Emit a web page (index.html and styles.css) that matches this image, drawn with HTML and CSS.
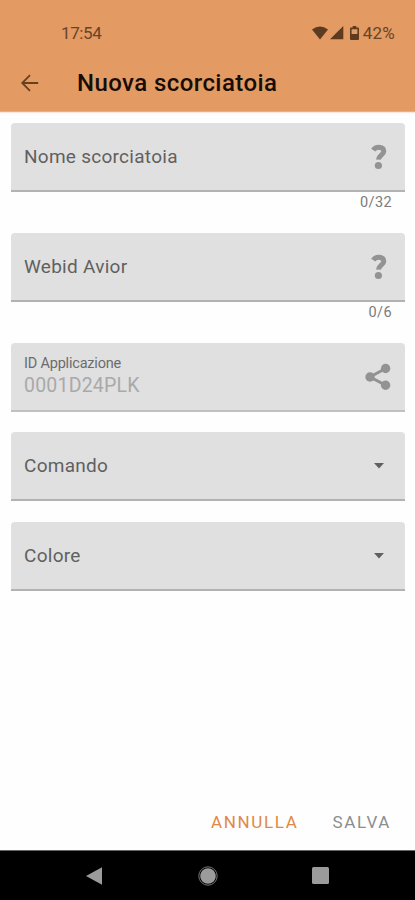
FILE: index.html
```html
<!DOCTYPE html>
<html lang="it">
<head>
<meta charset="utf-8">
<meta name="viewport" content="width=device-width, initial-scale=1">
<title>Nuova scorciatoia</title>
<link rel="stylesheet" href="styles.css">
</head>
<body>
<div class="screen">
  <header class="header">
    <div class="status">
      <span class="clock">17:54</span>
      <span class="indicators">
        <svg class="wifi" width="16" height="14" viewBox="0 0 16 14"><path d="M0 3.5Q8-2.7 16 3.5L8 13.5Z"/></svg>
        <svg class="signal" width="14" height="14" viewBox="0 0 14 14"><path d="M13.3 0V13.2H0Z"/></svg>
        <svg class="battery" width="9" height="14" viewBox="0 0 9 14"><path fill-rule="evenodd" d="M2.7 0H6.3V1.5H8Q9 1.5 9 2.5V13Q9 14 8 14H1Q0 14 0 13V2.5Q0 1.5 1 1.5H2.7ZM1.6 3.2V8H7.4V3.2Z"/></svg>
        <span class="percent">42%</span>
      </span>
    </div>
    <div class="appbar">
      <svg class="back" width="18" height="18" viewBox="0 0 18 18"><path d="M17.2 9H1.4M9 1.2L1.2 9L9 16.8"/></svg>
      <h1 class="title">Nuova scorciatoia</h1>
    </div>
  </header>
  <main class="form">
    <div class="field">
      <span class="label">Nome scorciatoia</span>
      <svg class="help" width="16" height="26" viewBox="0 0 16 26"><path d="M2.2 6.2Q4.2 3.3 7.6 3.3Q12.8 3.3 12.8 7.3C12.8 11 7.6 11.4 7.4 15.6"/><circle cx="7.4" cy="21.5" r="3.6"/></svg>
    </div>
    <div class="counter">0/32</div>
    <div class="field">
      <span class="label">Webid Avior</span>
      <svg class="help" width="16" height="26" viewBox="0 0 16 26"><path d="M2.2 6.2Q4.2 3.3 7.6 3.3Q12.8 3.3 12.8 7.3C12.8 11 7.6 11.4 7.4 15.6"/><circle cx="7.4" cy="21.5" r="3.6"/></svg>
    </div>
    <div class="counter">0/6</div>
    <div class="field disabled">
      <div class="stack">
        <span class="caption">ID Applicazione</span>
        <span class="value">0001D24PLK</span>
      </div>
      <svg class="share" width="26" height="28" viewBox="0 0 26 28"><path d="M20.5 5.5L5 14L20.5 22.2"/><circle cx="20.6" cy="5.5" r="4.7"/><circle cx="5" cy="14" r="4.7"/><circle cx="20.6" cy="22.2" r="4.7"/></svg>
    </div>
    <div class="field">
      <span class="label">Comando</span>
      <svg class="caret" width="10" height="6" viewBox="0 0 10 6"><path d="M0 0H10L5 5.4Z"/></svg>
    </div>
    <div class="field">
      <span class="label">Colore</span>
      <svg class="caret" width="10" height="6" viewBox="0 0 10 6"><path d="M0 0H10L5 5.4Z"/></svg>
    </div>
  </main>
  <footer class="actions">
    <button class="action cancel">ANNULLA</button>
    <button class="action save">SALVA</button>
  </footer>
  <nav class="navbar">
    <svg width="16" height="18" viewBox="0 0 16 18"><path d="M16 .3V17.7L0 9Z"/></svg>
    <svg width="20" height="20" viewBox="0 0 20 20"><circle cx="10" cy="10" r="7.8"/><circle class="ring" cx="10" cy="10" r="9.2"/></svg>
    <svg width="17" height="17" viewBox="0 0 17 17"><rect width="17" height="17" rx="1.5"/></svg>
  </nav>
</div>
</body>
</html>
```
FILE: styles.css
```css
* { box-sizing: border-box; }
body {
  margin: 0;
  background: #fefefe;
  font-family: Roboto, "Liberation Sans", sans-serif;
}
.screen {
  display: flex;
  flex-direction: column;
  width: 415px;
  height: 900px;
  overflow: hidden;
}
.header {
  flex: none;
  height: 112px;
  padding-top: 20px;
  background: #e39a63;
  border-bottom: 1px solid #e8ae86;
  box-shadow: 0 1px 1px #f8e6e0;
}
.status {
  display: flex;
  justify-content: space-between;
  align-items: center;
  height: 26px;
  padding: 0 20px 0 61px;
  color: #694427;
  font-size: 17px;
  line-height: 26px;
}
.clock { letter-spacing: -.4px; }
.indicators { display: flex; align-items: center; }
.indicators svg { fill: #5d3b20; }
.signal { margin-left: 2px; }
.battery { margin-left: 6px; }
.percent { margin-left: 4px; letter-spacing: .2px; }
.appbar {
  display: flex;
  align-items: center;
  height: 32px;
  margin-top: 21px;
  padding-left: 21px;
}
.back { fill: none; stroke: #67401f; stroke-width: 1.8; }
.title {
  margin: 0 0 0 38px;
  color: #170d05;
  font-size: 24px;
  font-weight: 500;
  line-height: 32px;
  letter-spacing: .42px;
}
.form { flex: 1; padding: 11px 10px 0 11px; }
.field {
  display: flex;
  align-items: center;
  justify-content: space-between;
  height: 69px;
  padding: 1px 18px 0 13px;
  background: #e0e0e0;
  border-bottom: 2px solid #b2b2b2;
  border-radius: 4px 4px 0 0;
}
.label { color: #606060; font-size: 19px; line-height: 24px; letter-spacing: .27px; }
.help { fill: #939393; }
.help path { fill: none; stroke: #939393; stroke-width: 5; }
.counter {
  height: 41px;
  padding: 2px 13px 0 0;
  color: #7b7b7b;
  font-size: 14.5px;
  line-height: 18px;
  letter-spacing: .4px;
  text-align: right;
}
.disabled { padding-right: 14px; border-bottom-color: #c0c0c0; }
.disabled + .field { margin-top: 20px; }
.disabled + .field + .field { margin-top: 21px; }
.stack { display: flex; flex-direction: column; }
.caption { color: #6c6c6c; font-size: 14.5px; line-height: 18px; letter-spacing: -.2px; }
.value { color: #a9a9a9; font-size: 19.5px; line-height: 26px; letter-spacing: .2px; }
.share { fill: #939393; }
.share path { fill: none; stroke: #939393; stroke-width: 3; }
.caret { margin-right: 3px; fill: #606060; }
.actions {
  display: flex;
  justify-content: flex-end;
  gap: 34px;
  height: 32px;
  margin-bottom: 8px;
  padding-right: 24px;
}
.action {
  display: block;
  height: 24px;
  padding: 0;
  border: 0;
  background: none;
  color: #8d8d8d;
  font: 400 17px/24px Roboto, "Liberation Sans", sans-serif;
  letter-spacing: 1.65px;
}
.cancel { color: #e08847; }
.navbar {
  display: flex;
  align-items: center;
  flex: none;
  height: 50px;
  padding-left: 86px;
  background: #000;
  border-top: 1px solid #666;
}
.navbar svg { fill: #9b9b9b; }
.navbar svg:nth-child(2) { margin-left: 96px; }
.navbar svg:nth-child(3) { margin-left: 94px; }
.navbar .ring { fill: none; stroke: #777; stroke-width: 1; }
```
